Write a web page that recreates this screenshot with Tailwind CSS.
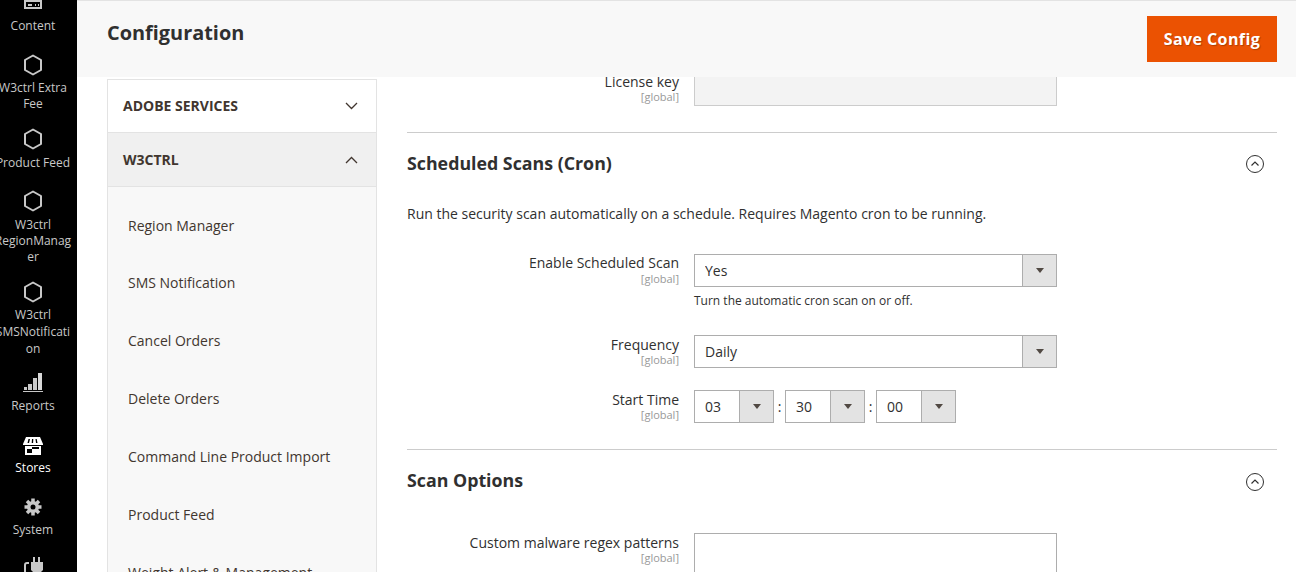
<!DOCTYPE html>
<html lang="en">
<head>
  <meta charset="UTF-8" />
  <meta name="viewport" content="width=device-width, initial-scale=1.0" />
  <title>Configuration</title>
  <script src="https://cdn.jsdelivr.net/npm/@tailwindcss/browser@4"></script>
</head>
<body class="h-[572px] overflow-hidden bg-white font-['Open_Sans',sans-serif] text-[14px] text-[#303030]">
  <div class="flex h-[572px] overflow-hidden">

    <!-- admin menu -->
    <nav class="w-[77px] shrink-0 overflow-hidden bg-black text-[12px] leading-[16px] text-[#c8c8c8]">
      <ul class="-ml-[6px] -mt-[17px] w-[78px] text-center [overflow-wrap:break-word]">
        <li class="h-[66px]">
          <svg class="mx-auto block h-[32px] w-[20px]" viewBox="0 0 20 32" fill="none" stroke="#c8c8c8" stroke-width="2"><path d="M2 1v24h16V1" /><path d="M2 18h16" /><path d="M5 22h4M12 22h1M15 22h1" /></svg>
          <span class="mt-[3px] block">Content</span>
        </li>
        <li class="h-[79px] pt-[5px]">
          <svg class="mx-auto block h-[22px] w-[20px]" viewBox="0 0 20 22" fill="none" stroke="#c8c8c8" stroke-width="2" stroke-linejoin="round"><path d="M10 1.500l8 4.500v10l-8 4.500-8-4.500V6z" /></svg>
          <span class="mt-[4px] block">W3ctrl Extra Fee</span>
        </li>
        <li class="h-[62px]">
          <svg class="mx-auto block h-[22px] w-[20px]" viewBox="0 0 20 22" fill="none" stroke="#c8c8c8" stroke-width="2" stroke-linejoin="round"><path d="M10 1.500l8 4.500v10l-8 4.500-8-4.500V6z" /></svg>
          <span class="mt-[5px] block">Product Feed</span>
        </li>
        <li class="h-[91px]">
          <svg class="mx-auto block h-[22px] w-[20px]" viewBox="0 0 20 22" fill="none" stroke="#c8c8c8" stroke-width="2" stroke-linejoin="round"><path d="M10 1.500l8 4.500v10l-8 4.500-8-4.500V6z" /></svg>
          <span class="mt-[5px] block">W3ctrl RegionManager</span>
        </li>
        <li class="h-[90px]">
          <svg class="mx-auto block h-[22px] w-[20px]" viewBox="0 0 20 22" fill="none" stroke="#c8c8c8" stroke-width="2" stroke-linejoin="round"><path d="M10 1.500l8 4.500v10l-8 4.500-8-4.500V6z" /></svg>
          <span class="mt-[3px] block leading-[17px]">W3ctrl SMSNotification</span>
        </li>
        <li class="h-[65px]">
          <svg class="mx-auto block h-[22px] w-[20px]" viewBox="0 0 20 22" fill="#c8c8c8"><path d="M0 20h20v1H0z" /><path d="M1 16h3v3H1zM5 13h4v6H5zM10 7h4v12h-4z" /><path d="M15 2h4v17h-4z" fill="#d8d8d8" /></svg>
          <span class="mt-[5px] block">Reports</span>
        </li>
        <li class="h-[61px] text-white">
          <svg class="mx-auto block h-[20px] w-[20px]" viewBox="0 0 20 20" fill="#fff"><path fill-rule="evenodd" d="M3 1h14l3 7v1H0V8zM5.500 3L4.500 7h1.500l1-4zM9 3l-.3 4h1.400l.2-4zM12.500 3l.5 4h1.500l-.8-4z" /><path fill-rule="evenodd" d="M2 10h16v9H2zM4 11v6h5v-4h7v-2h-7v2H4z" /></svg>
          <span class="mt-[4px] block">Stores</span>
        </li>
        <li class="h-[60px]">
          <svg class="mx-auto block h-[20px] w-[20px]" viewBox="0 0 20 20"><path d="M10 1.500v17M1.500 10h17M4 4l12 12M16 4L4 16" stroke="#c8c8c8" stroke-width="3.500" /><circle cx="10" cy="10" r="6" fill="#c8c8c8" /><circle cx="10" cy="10" r="2.500" fill="#000" /></svg>
          <span class="mt-[5px] block">System</span>
        </li>
        <li>
          <svg class="mx-auto block h-[22px] w-[20px]" viewBox="0 0 20 22" fill="#c8c8c8"><path d="M10 0h2v5h-2zM15 0h2v5h-2zM8 5h12v8l-3 3h-6l-3-3z" /><path d="M2 22V8q0-2 2-2h2" fill="none" stroke="#c8c8c8" stroke-width="2" /></svg>
        </li>
      </ul>
    </nav>

    <div class="min-w-0 flex-1">
      <!-- page actions -->
      <header class="relative z-10 flex h-[77px] items-start justify-between border-t border-[#e3e3e3] bg-[#f8f8f8] pl-[30px] pr-[19px]">
        <h1 class="mt-[17px] text-[19.9px] font-bold leading-[30px] text-[#303030]">Configuration</h1>
        <button class="mt-[15px] h-[46px] w-[130px] bg-[#eb5202] text-[16px] font-bold tracking-[0.4px] text-white [text-shadow:1px_1px_1px_rgba(0,0,0,0.25)]">Save Config</button>
      </header>

      <div class="flex pl-[30px] pr-[19px]">
        <!-- config tabs -->
        <aside class="mt-[2px] h-[600px] w-[270px] shrink-0 border-x border-[#e3e3e3]">
          <div class="flex h-[54px] items-center justify-between border-y border-[#e3e3e3] pl-[15px] pr-[18px]">
            <span class="pb-[2px] text-[14px] font-bold text-[#41362f]">ADOBE SERVICES</span>
            <svg class="h-[8px] w-[13px]" viewBox="0 0 13 8" fill="none" stroke="#41362f" stroke-width="1.300"><path d="M1 1l5.500 5.500L12 1" /></svg>
          </div>
          <div class="flex h-[54px] items-center justify-between border-b border-[#e3e3e3] bg-[#f0f0f0] pl-[15px] pr-[18px]">
            <span class="text-[14px] font-bold text-[#41362f]">W3CTRL</span>
            <svg class="h-[8px] w-[13px]" viewBox="0 0 13 8" fill="none" stroke="#41362f" stroke-width="1.300"><path d="M1 7l5.500-5.500L12 7" /></svg>
          </div>
          <ul class="bg-[#f8f8f8] pl-[20px] pt-[11px] text-[14px] text-[#41362f]">
            <li class="flex h-[55px] items-center">Region Manager</li>
            <li class="flex h-[58px] items-center">SMS Notification</li>
            <li class="flex h-[58px] items-center">Cancel Orders</li>
            <li class="flex h-[58px] items-center">Delete Orders</li>
            <li class="flex h-[58px] items-center">Command Line Product Import</li>
            <li class="flex h-[58px] items-center">Product Feed</li>
            <li class="flex h-[58px] items-center">Weight Alert &amp; Management</li>
          </ul>
        </aside>

        <!-- config form -->
        <main class="ml-[30px] min-w-0 flex-1">
          <div class="flex items-start">
            <div class="-mt-[5px] w-[272px] text-right">
              <div class="leading-[20px]">License key</div>
              <div class="-mt-[2px] text-[11px] leading-[14px] text-[#999]">[global]</div>
            </div>
            <div class="ml-[15px] h-[29px] w-[363px] border border-t-0 border-[#cccccc] bg-[#f3f3f3]"></div>
          </div>

          <section class="mt-[26px] border-t border-[#cccccc]">
            <div class="flex h-[62px] items-center justify-between pr-[13px]">
              <h2 class="pb-[2px] text-[17.8px] font-bold text-[#303030]">Scheduled Scans (Cron)</h2>
              <svg class="h-[18px] w-[18px]" viewBox="0 0 18 18" fill="none" stroke="#303030"><circle cx="9" cy="9" r="8.500" /><path d="M5.500 10.500L9 7l3.500 3.500" stroke-width="1.200" /></svg>
            </div>
            <p class="mt-[9px] leading-[20px]">Run the security scan automatically on a schedule. Requires Magento cron to be running.</p>

            <div class="mt-[29px] flex items-start">
              <div class="w-[272px] text-right">
                <div class="leading-[20px]">Enable Scheduled Scan</div>
                <div class="-mt-[1px] text-[11px] leading-[14px] text-[#999]">[global]</div>
              </div>
              <div class="ml-[15px] mt-[1px] w-[363px]">
                <div class="flex h-[33px] border border-[#adadad]">
                  <select class="min-w-0 flex-1 appearance-none pl-[10px]"><option>Yes</option></select>
                  <span class="flex w-[34px] items-center justify-center border-l border-[#adadad] bg-[#e3e3e3]"><span class="h-0 w-0 border-x-[4px] border-t-[5px] border-x-transparent border-t-[#514943]"></span></span>
                </div>
                <p class="mt-[5px] text-[12px] leading-[18px]">Turn the automatic cron scan on or off.</p>
              </div>
            </div>

            <div class="mt-[25px] flex items-start">
              <div class="w-[272px] text-right">
                <div class="leading-[20px]">Frequency</div>
                <div class="-mt-[2px] text-[11px] leading-[14px] text-[#999]">[global]</div>
              </div>
              <div class="ml-[15px] flex h-[33px] w-[363px] border border-[#adadad]">
                <select class="min-w-0 flex-1 appearance-none pl-[10px]"><option>Daily</option></select>
                <span class="flex w-[34px] items-center justify-center border-l border-[#adadad] bg-[#e3e3e3]"><span class="h-0 w-0 border-x-[4px] border-t-[5px] border-x-transparent border-t-[#514943]"></span></span>
              </div>
            </div>

            <div class="mt-[22px] flex items-start">
              <div class="w-[272px] text-right">
                <div class="leading-[20px]">Start Time</div>
                <div class="-mt-[2px] text-[11px] leading-[14px] text-[#999]">[global]</div>
              </div>
              <div class="ml-[15px] flex h-[33px] items-center">
                <div class="flex h-[33px] w-[80px] border border-[#adadad]">
                  <select class="w-[44px] appearance-none pl-[10px]"><option>03</option></select>
                  <span class="flex flex-1 items-center justify-center border-l border-[#adadad] bg-[#e3e3e3]"><span class="h-0 w-0 border-x-[4px] border-t-[5px] border-x-transparent border-t-[#514943]"></span></span>
                </div>
                <span class="w-[11px] text-center">:</span>
                <div class="flex h-[33px] w-[80px] border border-[#adadad]">
                  <select class="w-[44px] appearance-none pl-[10px]"><option>30</option></select>
                  <span class="flex flex-1 items-center justify-center border-l border-[#adadad] bg-[#e3e3e3]"><span class="h-0 w-0 border-x-[4px] border-t-[5px] border-x-transparent border-t-[#514943]"></span></span>
                </div>
                <span class="w-[11px] text-center">:</span>
                <div class="flex h-[33px] w-[80px] border border-[#adadad]">
                  <select class="w-[44px] appearance-none pl-[10px]"><option>00</option></select>
                  <span class="flex flex-1 items-center justify-center border-l border-[#adadad] bg-[#e3e3e3]"><span class="h-0 w-0 border-x-[4px] border-t-[5px] border-x-transparent border-t-[#514943]"></span></span>
                </div>
              </div>
            </div>
          </section>

          <section class="mt-[26px] border-t border-[#cccccc]">
            <div class="flex h-[63px] items-center justify-between pr-[13px]">
              <h2 class="pb-[2px] text-[17.8px] font-bold text-[#303030]">Scan Options</h2>
              <svg class="mt-[1px] h-[18px] w-[18px]" viewBox="0 0 18 18" fill="none" stroke="#303030"><circle cx="9" cy="9" r="8.500" /><path d="M5.500 10.500L9 7l3.500 3.500" stroke-width="1.200" /></svg>
            </div>
            <div class="mt-[20px] flex items-start">
              <div class="w-[272px] text-right">
                <div class="leading-[20px]">Custom malware regex patterns</div>
                <div class="-mt-[2px] text-[11px] leading-[14px] text-[#999]">[global]</div>
              </div>
              <textarea class="ml-[15px] h-[120px] w-[363px] border border-[#adadad]"></textarea>
            </div>
          </section>
        </main>
      </div>
    </div>
  </div>
</body>
</html>
